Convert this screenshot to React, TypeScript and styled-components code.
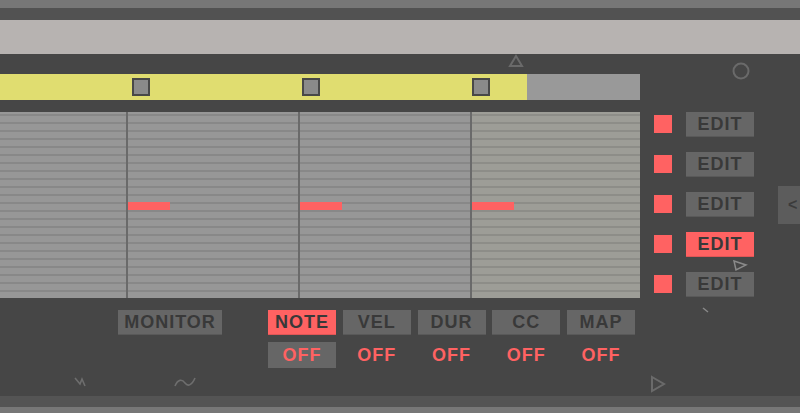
import styled, { createGlobalStyle } from "styled-components";

const GlobalStyle = createGlobalStyle`
  html, body {
    margin: 0;
    padding: 0;
    background: #464646;
    overflow: hidden;
  }
  #root {
    width: 800px;
    height: 413px;
  }
`;

const Frame = styled.div`
  width: 800px;
  height: 413px;
  display: flex;
  flex-direction: column;
  background: #464646;
  font-family: "Liberation Sans", Arial, sans-serif;
  font-weight: bold;
`;

const Band = styled.div<{ $h: number; $bg: string }>`
  height: ${(p) => p.$h}px;
  flex: none;
  background: ${(p) => p.$bg};
`;

const Main = styled.div`
  flex: 1;
  display: grid;
  grid-template-columns: 640px 160px;
  position: relative;
`;

const LeftArea = styled.div`
  display: flex;
  flex-direction: column;
`;

const HeaderRow = styled.div`
  height: 20px;
  display: flex;
  align-items: flex-start;
  padding-left: 508px;
`;

const Timeline = styled.div`
  height: 26px;
  position: relative;
  background: linear-gradient(to right, #e0dd70 0 527px, #999999 527px 640px);
`;

const Handle = styled.div`
  position: absolute;
  top: 4px;
  width: 18px;
  height: 18px;
  box-sizing: border-box;
  border: 2px solid #484848;
  background: #8a8a8a;
`;

const Grid = styled.div`
  margin-top: 12px;
  height: 186px;
  display: grid;
  grid-template-columns: 128px 172px 172px 168px;
`;

const Column = styled.div<{ $bg: string; $line?: boolean }>`
  box-sizing: border-box;
  padding-top: 90px;
  border-right: ${(p) => (p.$line ? "2px solid #6a6a6a" : "none")};
  background-color: ${(p) => p.$bg};
  background-image: repeating-linear-gradient(
    to bottom,
    transparent 0 2px,
    rgba(0, 0, 0, 0.1) 2px 4px,
    transparent 4px 8px
  );
`;

const NoteBar = styled.div`
  width: 42px;
  height: 8px;
  background: #ff6262;
`;

const Controls = styled.div`
  display: flex;
  align-items: flex-start;
  padding-top: 12px;
  padding-left: 118px;
`;

const MonitorCol = styled.div`
  width: 104px;
  display: flex;
  flex-direction: column;
  margin-right: 46px;
`;

const GlyphRow = styled.div`
  display: flex;
  align-items: flex-start;
  margin-top: 41px;
  margin-left: -44px;
  gap: 86px;
`;

const Btn = styled.div<{ $active?: boolean; $w?: number }>`
  width: ${(p) => (p.$w ? `${p.$w}px` : "100%")};
  height: 25px;
  box-sizing: border-box;
  display: flex;
  align-items: center;
  justify-content: center;
  background: ${(p) => (p.$active ? "#ff6262" : "#666666")};
  color: #393939;
  font-size: 18px;
  letter-spacing: 1px;
  box-shadow: inset 0 -1px 0 rgba(0, 0, 0, 0.12);
`;

const ModeGrid = styled.div`
  display: grid;
  grid-template-columns: repeat(5, 68px);
  grid-auto-rows: min-content;
  align-content: start;
  column-gap: 6.75px;
  row-gap: 7px;
`;

const Off = styled.div<{ $boxed?: boolean }>`
  height: 26px;
  display: flex;
  align-items: center;
  justify-content: center;
  background: ${(p) => (p.$boxed ? "#666666" : "transparent")};
  color: #ff6262;
  font-size: 18px;
  letter-spacing: 1px;
`;

const RightArea = styled.div`
  display: flex;
  flex-direction: column;
  padding-left: 14px;
`;

const CircleRow = styled.div`
  height: 57px;
  display: flex;
  align-items: flex-start;
  padding: 8px 0 0 78px;
  box-sizing: border-box;
`;

const EditList = styled.div`
  display: flex;
  flex-direction: column;
  gap: 14px;
`;

const EditRow = styled.div`
  height: 26px;
  display: flex;
  align-items: center;
  gap: 14px;
`;

const Led = styled.div`
  width: 18px;
  height: 18px;
  background: #ff6262;
`;

const BottomRow = styled.div`
  display: flex;
  padding-top: 78px;
  margin-left: -4px;
`;

const Marker = styled.div`
  position: absolute;
`;

const SideTab = styled.div`
  position: absolute;
  right: 0;
  top: 132px;
  width: 22px;
  height: 38px;
  background: #5c5c5c;
  color: #3b3b3b;
  font-size: 16px;
  display: flex;
  align-items: center;
  justify-content: flex-start;
  padding-left: 10px;
  box-sizing: border-box;
  overflow: hidden;
`;

const handles = [132, 302, 472];
const notes = [false, true, true, true];
const modes = ["NOTE", "VEL", "DUR", "CC", "MAP"];

export default function App() {
  return (
    <>
      <GlobalStyle />
      <Frame>
        <Band $h={8} $bg="#777777" />
        <Band $h={12} $bg="#525252" />
        <Band $h={34} $bg="#b7b3b1" />
        <Main>
          <LeftArea>
            <HeaderRow>
              <svg width="16" height="14" viewBox="0 0 16 14">
                <path d="M8 2 L14 12 L2 12 Z" fill="none" stroke="#6a6a6a" strokeWidth="2" />
              </svg>
            </HeaderRow>
            <Timeline>
              {handles.map((x) => (
                <Handle key={x} style={{ left: x }} />
              ))}
            </Timeline>
            <Grid>
              {notes.map((n, i) => (
                <Column key={i} $bg={i === 3 ? "#9d9d97" : "#979797"} $line={i < 3}>
                  {n && <NoteBar />}
                </Column>
              ))}
            </Grid>
            <Controls>
              <MonitorCol>
                <Btn>MONITOR</Btn>
                <GlyphRow>
                  <svg width="14" height="12" viewBox="0 0 14 12">
                    <path d="M1 2 L6 8 L8 3 L11 10" fill="none" stroke="#6e6e6e" strokeWidth="1.6" />
                  </svg>
                  <svg width="22" height="12" viewBox="0 0 22 12">
                    <path d="M1 10 C4 3, 8 3, 11 7 S18 9, 21 2" fill="none" stroke="#6e6e6e" strokeWidth="1.6" />
                  </svg>
                </GlyphRow>
              </MonitorCol>
              <ModeGrid>
                {modes.map((m, i) => (
                  <Btn key={m} $active={i === 0}>
                    {m}
                  </Btn>
                ))}
                {modes.map((m, i) => (
                  <Off key={m + "off"} $boxed={i === 0}>
                    OFF
                  </Off>
                ))}
              </ModeGrid>
            </Controls>
          </LeftArea>
          <RightArea>
            <CircleRow>
              <svg width="18" height="18" viewBox="0 0 18 18">
                <circle cx="9" cy="9" r="7.5" fill="none" stroke="#6a6a6a" strokeWidth="2" />
              </svg>
            </CircleRow>
            <EditList>
              {[0, 1, 2, 3, 4].map((i) => (
                <EditRow key={i}>
                  <Led />
                  <Btn $w={68} $active={i === 3}>
                    EDIT
                  </Btn>
                </EditRow>
              ))}
            </EditList>
            <BottomRow>
              <svg width="16" height="18" viewBox="0 0 16 18">
                <path d="M2 2 L14 9 L2 16 Z" fill="none" stroke="#6a6a6a" strokeWidth="2" />
              </svg>
            </BottomRow>
          </RightArea>
          <Marker style={{ left: 732, top: 204 }}>
            <svg width="16" height="12" viewBox="0 0 16 12">
              <path d="M2 1 L14 5 L4 10 Z" fill="none" stroke="#8a8a8a" strokeWidth="1.5" />
            </svg>
          </Marker>
          <Marker style={{ left: 702, top: 245 }}>
            <svg width="8" height="6" viewBox="0 0 8 6">
              <path d="M1 1 L6 5" stroke="#8a8a8a" strokeWidth="1.5" />
            </svg>
          </Marker>
          <SideTab>&lt;</SideTab>
        </Main>
        <Band $h={11} $bg="#545454" />
        <Band $h={6} $bg="#777777" />
      </Frame>
    </>
  );
}
